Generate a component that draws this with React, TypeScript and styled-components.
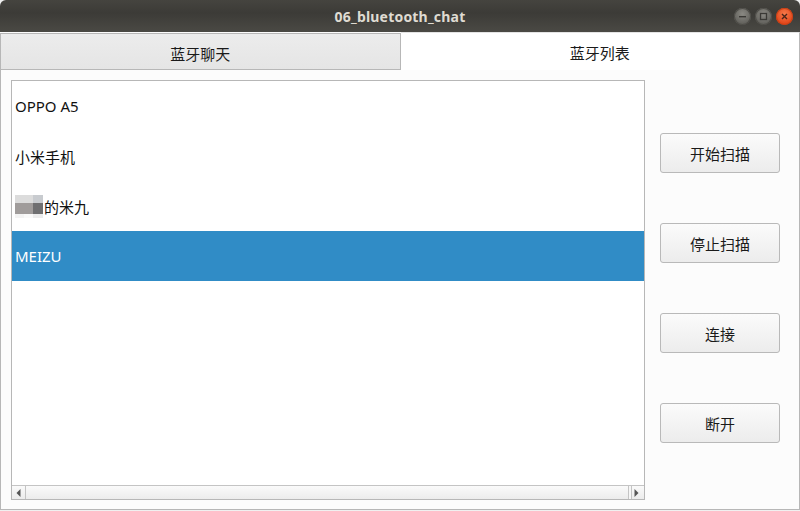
import React from "react";
import styled, { createGlobalStyle } from "styled-components";

const Global = createGlobalStyle`
  html, body { margin: 0; padding: 0; background: #f2f1f0; }
  body { width: 800px; height: 511px; overflow: hidden; }
  * { box-sizing: border-box; }
`;

const UI_FONT = `"Noto Sans", "Noto Sans CJK SC", sans-serif`;

const Window = styled.div`
  width: 800px;
  height: 511px;
  display: flex;
  flex-direction: column;
  font-family: ${UI_FONT};
  color: #1a1a1a;
  background: #f0f0f0;
`;

const TitleBar = styled.div`
  height: 32px;
  flex: none;
  position: relative;
  display: flex;
  align-items: center;
  justify-content: center;
  border-radius: 6px 6px 0 0;
  background: linear-gradient(#45443f, #3c3b37 40%, #4a4944);
`;

const Title = styled.span`
  font-family: "Noto Sans", sans-serif;
  font-weight: 700;
  font-size: 14px;
  color: #dfdbd2;
  letter-spacing: 0.2px;
`;

const WinButtons = styled.div`
  position: absolute;
  right: 7px;
  top: 8px;
  display: flex;
  gap: 4px;
`;

const WinButton = styled.div<{ $close?: boolean }>`
  width: 17px;
  height: 17px;
  border-radius: 50%;
  display: flex;
  align-items: center;
  justify-content: center;
  background: ${(p) =>
    p.$close
      ? "radial-gradient(circle at 50% 35%, #f57a4a, #e2461a 70%)"
      : "radial-gradient(circle at 50% 35%, #8a8983, #62615c 70%)"};
  box-shadow: inset 0 0 0 1px ${(p) => (p.$close ? "#c94015" : "#4e4d48")};
`;

const TabBar = styled.div`
  height: 38px;
  flex: none;
  display: flex;
  background: #fcfcfc;
`;

const Tab = styled.div<{ $active?: boolean }>`
  flex: 1;
  display: flex;
  align-items: center;
  justify-content: center;
  font-size: 15px;
  color: #1a1a1a;
  ${(p) =>
    p.$active
      ? `
    background: #ffffff;
    border-top: 1px solid #e4e4e4;
    border-right: 1px solid #b9b9b9;
    padding-top: 1px;
  `
      : `
    margin-top: 1px;
    background: linear-gradient(#ececec, #e5e5e5);
    border: 1px solid #b7b7b7;
    padding-top: 3px;
  `}
`;

const Pane = styled.div`
  flex: none;
  height: 440px;
  display: flex;
  background: #fcfcfc;
  border-left: 1px solid #b7b7b7;
  border-right: 1px solid #b7b7b7;
  border-bottom: 1px solid #b7b7b7;
  padding: 10px 19px 9px 10px;
  gap: 15px;
`;

const ListBox = styled.div`
  width: 634px;
  height: 420px;
  border: 1px solid #b7b7b7;
  background: #ffffff;
  display: flex;
  flex-direction: column;
`;

const Viewport = styled.div`
  flex: 1;
  display: flex;
  flex-direction: column;
`;

const Row = styled.div<{ $selected?: boolean }>`
  height: 50px;
  display: flex;
  align-items: center;
  padding-left: 3px;
  font-size: 15px;
  color: ${(p) => (p.$selected ? "#ffffff" : "#111111")};
  background: ${(p) => (p.$selected ? "#308cc6" : "transparent")};
`;

const Mosaic = styled.span`
  display: inline-grid;
  grid-template-columns: 9px 9px 10px;
  grid-template-rows: 8px 11px 4px;
  margin-right: 1px;
  margin-top: 1px;
`;

const Cell = styled.span<{ $c: string }>`
  background: ${(p) => p.$c};
`;

const HScroll = styled.div`
  height: 14px;
  flex: none;
  display: flex;
  border-top: 1px solid #c4c4c4;
  background: linear-gradient(#fafafa, #ececec);
`;

const ScrollBtn = styled.div<{ $side: "left" | "right" }>`
  width: ${(p) => (p.$side === "left" ? "14px" : "16px")};
  display: flex;
  align-items: center;
  justify-content: center;
  ${(p) =>
    p.$side === "left"
      ? "border-right: 1px solid #c4c4c4;"
      : "border-left: 1px solid #c4c4c4; box-shadow: inset 2px 0 0 #f6f6f6, inset 3px 0 0 #c4c4c4;"}
`;

const Track = styled.div`
  flex: 1;
`;

const ButtonColumn = styled.div`
  width: 120px;
  display: flex;
  flex-direction: column;
  gap: 50px;
  padding-top: 53px;
`;

const PushButton = styled.button`
  height: 40px;
  width: 120px;
  border: 1px solid #b9b9b9;
  border-radius: 3px;
  background: linear-gradient(#fbfbfb, #ececec);
  font-family: ${UI_FONT};
  font-size: 15px;
  color: #1a1a1a;
  padding: 0;
  padding-top: 1px;
`;

const Arrow = ({ dir }: { dir: "left" | "right" }) => (
  <svg width="5" height="8" viewBox="0 0 5 8">
    {dir === "left" ? (
      <polygon points="4.5,0 4.5,8 0.5,4" fill="#555" />
    ) : (
      <polygon points="0.5,0 0.5,8 4.5,4" fill="#555" />
    )}
  </svg>
);

const mosaic = [
  "#dcdcdc", "#dcdcdc", "#c8cbcf",
  "#a09c9b", "#a09c9b", "#6f6f71",
  "#f3f3f3", "#f9f9f9", "#ececec",
];

export default function App() {
  return (
    <>
      <Global />
      <Window>
        <TitleBar>
          <Title>06_bluetooth_chat</Title>
          <WinButtons>
            <WinButton>
              <svg width="9" height="9" viewBox="0 0 9 9">
                <rect x="1" y="4" width="7" height="1.4" fill="#3a3935" />
              </svg>
            </WinButton>
            <WinButton>
              <svg width="9" height="9" viewBox="0 0 9 9">
                <rect x="1.5" y="1.5" width="6" height="6" fill="none" stroke="#3a3935" strokeWidth="1.3" />
              </svg>
            </WinButton>
            <WinButton $close>
              <svg width="9" height="9" viewBox="0 0 9 9">
                <path d="M2 2 L7 7 M7 2 L2 7" stroke="#4a2418" strokeWidth="1.4" />
              </svg>
            </WinButton>
          </WinButtons>
        </TitleBar>
        <TabBar>
          <Tab>蓝牙聊天</Tab>
          <Tab $active>蓝牙列表</Tab>
        </TabBar>
        <Pane>
          <ListBox>
            <Viewport>
              <Row>OPPO A5</Row>
              <Row>小米手机</Row>
              <Row>
                <Mosaic>
                  {mosaic.map((c, i) => (
                    <Cell key={i} $c={c} />
                  ))}
                </Mosaic>
                的米九
              </Row>
              <Row $selected>MEIZU</Row>
            </Viewport>
            <HScroll>
              <ScrollBtn $side="left">
                <Arrow dir="left" />
              </ScrollBtn>
              <Track />
              <ScrollBtn $side="right">
                <Arrow dir="right" />
              </ScrollBtn>
            </HScroll>
          </ListBox>
          <ButtonColumn>
            <PushButton>开始扫描</PushButton>
            <PushButton>停止扫描</PushButton>
            <PushButton>连接</PushButton>
            <PushButton>断开</PushButton>
          </ButtonColumn>
        </Pane>
      </Window>
    </>
  );
}
